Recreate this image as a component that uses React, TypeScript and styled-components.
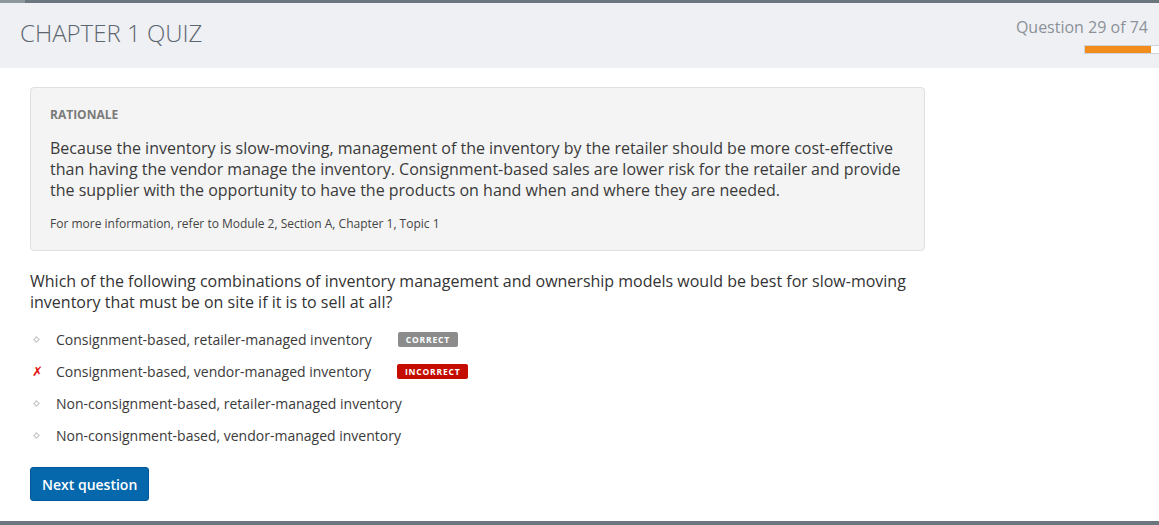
import React from 'react';
import styled, { createGlobalStyle } from 'styled-components';

const GlobalStyle = createGlobalStyle`
  html, body {
    margin: 0;
    padding: 0;
    background: #ffffff;
    font-family: 'Open Sans', 'Liberation Sans', sans-serif;
    color: #333333;
  }
`;

const Page = styled.div`
  width: 1159px;
  height: 525px;
  display: flex;
  flex-direction: column;
  overflow: hidden;
`;

const TopStrip = styled.div`
  height: 3px;
  background: #6c767e;
  display: flex;
`;

const TopStripDone = styled.div`
  width: 25px;
  background: #8e979e;
`;

const Header = styled.header`
  height: 65px;
  background: #eff0f3;
  display: flex;
  justify-content: space-between;
  align-items: flex-start;
  padding-left: 20px;
`;

const Title = styled.h1`
  margin: 13px 0 0;
  font-size: 24px;
  font-weight: 300;
  color: #5d6670;
  letter-spacing: 0;
`;

const Progress = styled.div`
  display: flex;
  flex-direction: column;
  align-items: flex-end;
  padding-top: 13px;
`;

const ProgressLabel = styled.div`
  font-size: 16px;
  color: #8b929a;
  margin-right: 11px;
`;

const ProgressTrack = styled.div`
  margin-top: 7px;
  width: 74px;
  height: 7px;
  background: #ffffff;
  border: 1px solid #cfd2d6;
  border-right: none;
`;

const ProgressFill = styled.div`
  height: 100%;
  background: #f28c1c;
`;

const Content = styled.main`
  flex: 1;
  padding: 19px 30px 0;
  display: flex;
  flex-direction: column;
`;

const Rationale = styled.section`
  width: 895px;
  box-sizing: border-box;
  background: #f4f4f4;
  border: 1px solid #e0e0e0;
  border-radius: 4px;
  padding: 18px 19px 18px;
`;

const RationaleLabel = styled.div`
  font-size: 12px;
  font-weight: 700;
  color: #7a7a7a;
`;

const RationaleText = styled.p`
  margin: 15px 0 0;
  font-size: 16px;
  line-height: 21px;
  color: #3a3a3a;
`;

const RationaleNote = styled.p`
  margin: 14px 0 0;
  font-size: 12px;
  color: #444444;
`;

const Question = styled.p`
  margin: 20px 0 0;
  width: 895px;
  font-size: 16px;
  line-height: 21px;
  color: #333333;
`;

const Options = styled.ul`
  list-style: none;
  margin: 10px 0 0;
  padding: 0;
`;

const Option = styled.li`
  height: 32px;
  display: flex;
  align-items: center;
  font-size: 14px;
  color: #3a3a3a;
`;

const Marker = styled.span`
  width: 26px;
  display: flex;
  align-items: center;
  padding-left: 3px;
  box-sizing: border-box;
`;

const CrossMark = styled.span`
  color: #e2100c;
  font-family: 'DejaVu Sans', sans-serif;
  font-size: 13px;
  font-weight: 700;
  line-height: 1;
  margin-left: -1px;
`;

const Badge = styled.span<{ $tone: 'correct' | 'incorrect' }>`
  margin-left: 26px;
  height: 15px;
  padding: 0 8px;
  display: inline-flex;
  align-items: center;
  border-radius: 2px;
  font-size: 8.5px;
  font-weight: 700;
  letter-spacing: 0.8px;
  color: #ffffff;
  background: ${(p) => (p.$tone === 'correct' ? '#8c8c8c' : '#c40d00')};
`;

const NextButton = styled.button`
  margin-top: 16px;
  align-self: flex-start;
  height: 34px;
  padding: 0 11px;
  background: #0568ad;
  border: 1px solid #04579a;
  border-radius: 3px;
  color: #ffffff;
  font-family: 'Open Sans', 'Liberation Sans', sans-serif;
  font-size: 14px;
  font-weight: 600;
`;

const BottomStrip = styled.div`
  height: 4px;
  background: #6c767e;
`;

const Diamond = () => (
  <svg width="7" height="7" viewBox="0 0 7 7">
    <path d="M3.5 0.8 L6.2 3.5 L3.5 6.2 L0.8 3.5 Z" fill="none" stroke="#c9c9c9" strokeWidth="1.2" />
  </svg>
);

type Answer = { text: string; badge?: 'correct' | 'incorrect'; picked?: boolean };

const answers: Answer[] = [
  { text: 'Consignment-based, retailer-managed inventory', badge: 'correct' },
  { text: 'Consignment-based, vendor-managed inventory', badge: 'incorrect', picked: true },
  { text: 'Non-consignment-based, retailer-managed inventory' },
  { text: 'Non-consignment-based, vendor-managed inventory' },
];

const App = () => {
  const current = 29;
  const total = 74;

  return (
    <Page>
      <GlobalStyle />
      <TopStrip>
        <TopStripDone />
      </TopStrip>
      <Header>
        <Title>CHAPTER 1 QUIZ</Title>
        <Progress>
          <ProgressLabel>
            Question {current} of {total}
          </ProgressLabel>
          <ProgressTrack>
            <ProgressFill style={{ width: '89%' }} />
          </ProgressTrack>
        </Progress>
      </Header>
      <Content>
        <Rationale>
          <RationaleLabel>RATIONALE</RationaleLabel>
          <RationaleText>
            Because the inventory is slow-moving, management of the inventory by the retailer should be more
            cost-effective than having the vendor manage the inventory. Consignment-based sales are lower risk for
            the retailer and provide the supplier with the opportunity to have the products on hand when and where
            they are needed.
          </RationaleText>
          <RationaleNote>For more information, refer to Module 2, Section A, Chapter 1, Topic 1</RationaleNote>
        </Rationale>
        <Question>
          Which of the following combinations of inventory management and ownership models would be best for
          slow-moving inventory that must be on site if it is to sell at all?
        </Question>
        <Options>
          {answers.map((a) => (
            <Option key={a.text}>
              <Marker>{a.picked ? <CrossMark>✗</CrossMark> : <Diamond />}</Marker>
              {a.text}
              {a.badge && <Badge $tone={a.badge}>{a.badge === 'correct' ? 'CORRECT' : 'INCORRECT'}</Badge>}
            </Option>
          ))}
        </Options>
        <NextButton>Next question</NextButton>
      </Content>
      <BottomStrip />
    </Page>
  );
};

export default App;
